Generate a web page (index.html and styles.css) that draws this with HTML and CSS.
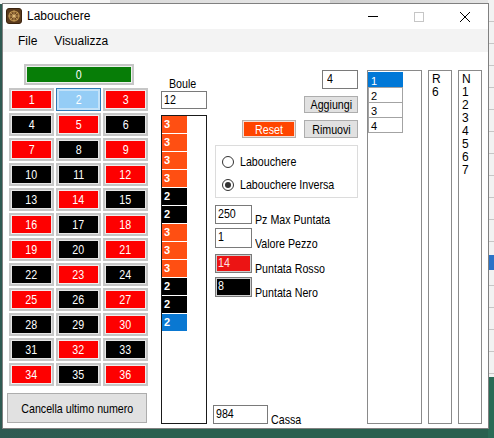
FILE: index.html
```html
<!DOCTYPE html>
<html lang="it">
<head>
<meta charset="utf-8">
<title>Labouchere</title>
<link rel="stylesheet" href="styles.css">
</head>
<body>
<div class="desktop">
  <div class="bg-top"></div>
  <div class="bg-right">
    <div class="bg-right-blue"></div>
    <div class="bg-right-teal"></div>
  </div>

  <div class="window">
    <div class="titlebar">
      <svg class="app-icon" viewBox="0 0 16 16" width="16" height="16">
        <rect x="0.5" y="0.5" width="15" height="15" rx="2.5" fill="#5a3a1c" stroke="#3a230f"/>
        <circle cx="8" cy="8" r="5.6" fill="#b08646"/>
        <circle cx="8" cy="8" r="4" fill="#6e4822"/>
        <path d="M8 2.4V13.6M2.4 8H13.6M4 4L12 12M12 4L4 12" stroke="#c9a060" stroke-width="0.8"/>
        <circle cx="8" cy="8" r="1.6" fill="#e0bb78"/>
      </svg>
      <span class="title">Labouchere</span>
      <div class="caption">
        <span class="cap-btn"><svg width="10" height="10" viewBox="0 0 10 10"><path d="M0 4.5H10" stroke="#000" stroke-width="1"/></svg></span>
        <span class="cap-btn"><svg width="10" height="10" viewBox="0 0 10 10"><rect x="0.5" y="0.5" width="9" height="9" fill="none" stroke="#c6c6c6" stroke-width="1"/></svg></span>
        <span class="cap-btn"><svg width="10" height="10" viewBox="0 0 10 10"><path d="M0 0L10 10M10 0L0 10" stroke="#000" stroke-width="1"/></svg></span>
      </div>
    </div>

    <div class="menubar">
      <span class="menu-item">File</span>
      <span class="menu-item">Visualizza</span>
    </div>

    <div class="client">
      <div class="col-roulette">
        <div class="zero"><span class="n">0</span></div>
        <div class="wheel-grid">
          <div class="cell red"><span class="n">1</span></div><div class="cell hot"><span class="n">2</span></div><div class="cell red"><span class="n">3</span></div>
          <div class="cell black"><span class="n">4</span></div><div class="cell red"><span class="n">5</span></div><div class="cell black"><span class="n">6</span></div>
          <div class="cell red"><span class="n">7</span></div><div class="cell black"><span class="n">8</span></div><div class="cell red"><span class="n">9</span></div>
          <div class="cell black"><span class="n">10</span></div><div class="cell black"><span class="n">11</span></div><div class="cell red"><span class="n">12</span></div>
          <div class="cell black"><span class="n">13</span></div><div class="cell red"><span class="n">14</span></div><div class="cell black"><span class="n">15</span></div>
          <div class="cell red"><span class="n">16</span></div><div class="cell black"><span class="n">17</span></div><div class="cell red"><span class="n">18</span></div>
          <div class="cell red"><span class="n">19</span></div><div class="cell black"><span class="n">20</span></div><div class="cell red"><span class="n">21</span></div>
          <div class="cell black"><span class="n">22</span></div><div class="cell red"><span class="n">23</span></div><div class="cell black"><span class="n">24</span></div>
          <div class="cell red"><span class="n">25</span></div><div class="cell black"><span class="n">26</span></div><div class="cell red"><span class="n">27</span></div>
          <div class="cell black"><span class="n">28</span></div><div class="cell black"><span class="n">29</span></div><div class="cell red"><span class="n">30</span></div>
          <div class="cell black"><span class="n">31</span></div><div class="cell red"><span class="n">32</span></div><div class="cell black"><span class="n">33</span></div>
          <div class="cell red"><span class="n">34</span></div><div class="cell black"><span class="n">35</span></div><div class="cell red"><span class="n">36</span></div>
        </div>
        <div class="btn cancel"><span class="n">Cancella ultimo numero</span></div>
      </div>

      <div class="col-boule">
        <div class="boule-label"><span class="n nl">Boule</span></div>
        <div class="tb boule-tb"><span class="n nl">12</span></div>
        <div class="boule-list">
          <div class="bi orange">3</div>
          <div class="bi orange">3</div>
          <div class="bi orange">3</div>
          <div class="bi orange">3</div>
          <div class="bi dark">2</div>
          <div class="bi dark">2</div>
          <div class="bi orange">3</div>
          <div class="bi orange">3</div>
          <div class="bi orange">3</div>
          <div class="bi dark">2</div>
          <div class="bi dark">2</div>
          <div class="bi sel">2</div>
        </div>
      </div>

      <div class="col-controls">
        <div class="tb tb-four"><span class="n nl">4</span></div>
        <div class="btn btn-small add"><span class="n">Aggiungi</span></div>
        <div class="btn-row">
          <div class="btn btn-small reset"><span class="n">Reset</span></div>
          <div class="btn btn-small"><span class="n">Rimuovi</span></div>
        </div>
        <div class="group">
          <div class="radio-row"><span class="radio"></span><span class="radio-text"><span class="n nl">Labouchere</span></span></div>
          <div class="radio-row"><span class="radio checked"></span><span class="radio-text"><span class="n nl">Labouchere Inversa</span></span></div>
        </div>
        <div class="field-row r-pz"><div class="tb tb-num"><span class="n nl">250</span></div><span class="field-label"><span class="n nl">Pz Max Puntata</span></span></div>
        <div class="field-row r-val"><div class="tb tb-num tall"><span class="n nl">1</span></div><span class="field-label"><span class="n nl">Valore Pezzo</span></span></div>
        <div class="field-row r-rosso"><div class="tb tb-num tb-red"><span class="n nl">14</span></div><span class="field-label"><span class="n nl">Puntata Rosso</span></span></div>
        <div class="field-row r-nero"><div class="tb tb-num tb-black tall"><span class="n nl">8</span></div><span class="field-label"><span class="n nl">Puntata Nero</span></span></div>
        <div class="field-row r-cassa"><div class="tb tb-cassa"><span class="n nl">984</span></div><span class="field-label"><span class="n nl">Cassa</span></span></div>
      </div>

      <div class="col-lists">
        <div class="list list-seq">
          <div class="li selected">1</div>
          <div class="li">2</div>
          <div class="li">3</div>
          <div class="li">4</div>
        </div>
        <div class="list list-text">R<br>6</div>
        <div class="list list-text">N<br>1<br>2<br>3<br>4<br>5<br>6<br>7</div>
      </div>
    </div>
  </div>
</div>
</body>
</html>
```
FILE: styles.css
```css
* { box-sizing: border-box; }
html, body { margin: 0; padding: 0; }
body {
  width: 494px;
  height: 438px;
  overflow: hidden;
  background: #29604f;
  font-family: "Liberation Sans", Arial, sans-serif;
}

.desktop {
  position: relative;
  width: 494px;
  height: 438px;
  overflow: hidden;
  background: linear-gradient(90deg, #2f5a52 0, #29604f 30%, #29604f 100%);
}

/* windows behind */
.bg-top {
  position: absolute;
  left: 0; top: 0;
  width: 494px; height: 4px;
  background: linear-gradient(90deg, #f4f4f4 0, #f4f4f4 110px, #d9d9d9 110px, #e9e9e9 330px, #cfcfcf 330px, #e6e6e6 494px);
}
.bg-right {
  position: absolute;
  left: 488px; top: 0;
  width: 6px; height: 438px;
  background: repeating-linear-gradient(180deg, #f2f2f2 0, #f2f2f2 21px, #c6c6c6 21px, #c6c6c6 22px);
}
.bg-right-blue {
  position: absolute;
  left: 0; top: 255px;
  width: 6px; height: 15px;
  background: #2b73c8;
}
.bg-right-teal {
  position: absolute;
  left: 0; top: 377px;
  width: 6px; height: 61px;
  background: #2a6b56;
}

/* window */
.window {
  position: absolute;
  left: 2px; top: 3px;
  width: 487px; height: 426px;
  border: 1px solid #808080;
  background: #fff;
  display: flex;
  flex-direction: column;
}

.titlebar {
  height: 25px;
  flex: none;
  display: flex;
  align-items: center;
  padding-left: 3px;
  background: #fff;
}
.app-icon { display: block; margin-top: -2px; }
.title {
  margin-left: 5px;
  margin-top: -1px;
  font-size: 12px;
  color: #000;
}
.caption {
  margin-left: auto;
  display: flex;
  height: 100%;
}
.cap-btn {
  width: 46px;
  display: flex;
  align-items: center;
  justify-content: center;
}
.cap-btn svg { display: block; }

.menubar {
  height: 23px;
  flex: none;
  display: flex;
  align-items: center;
  padding-left: 15px;
  background: #f3f3f3;
  font-size: 12px;
  color: #000;
}
.menu-item + .menu-item { margin-left: 17px; }

/* client area */
.client {
  flex: 1;
  display: flex;
  align-items: stretch;
  padding-bottom: 4px;
  font-family: "Liberation Sans", Arial, sans-serif;
  font-size: 13px;
  color: #000;
}

/* narrow text (Arial Narrow look) */
.n {
  display: inline-block;
  white-space: nowrap;
  transform: scaleX(0.82);
  transform-origin: center;
}
.n.nl { transform-origin: left center; }

/* roulette column */
.col-roulette {
  width: 141px;
  margin-left: 4px;
  padding-top: 12px;
  display: flex;
  flex-direction: column;
  align-items: flex-start;
}
.zero {
  width: 110px;
  height: 21px;
  margin-left: 17px;
  border: 2px solid #c6c6c6;
  box-shadow: inset 0 0 0 1px #eef2ee;
  background: #077d07;
  color: #fff;
  display: flex;
  align-items: center;
  justify-content: center;
}
.wheel-grid {
  margin-top: 3px;
  margin-left: 2px;
  display: grid;
  grid-template-columns: repeat(3, 45px);
  grid-auto-rows: 23px;
  gap: 2px;
}
.cell {
  border: 2px solid #c6c6c6;
  box-shadow: inset 0 0 0 1px #f3eded;
  color: #fff;
  display: flex;
  align-items: center;
  justify-content: center;
}
.cell.red { background: #fe0000; }
.cell.black { background: #000; box-shadow: inset 0 0 0 1px #e6e6e6; }
.cell.hot {
  background: #95cdf6;
  border: 1px solid #2f79b4;
  box-shadow: inset 0 0 0 2px #c4e2f8;
}

.btn {
  background: #e1e1e1;
  border: 1px solid #adadad;
  display: flex;
  align-items: center;
  justify-content: center;
  color: #000;
  white-space: nowrap;
}
.cancel {
  margin-top: 7px;
  width: 140px;
  height: 30px;
}

/* boule column */
.col-boule {
  width: 46px;
  margin-left: 13px;
  padding-top: 25px;
  display: flex;
  flex-direction: column;
}
.boule-label {
  line-height: 13px;
  padding-left: 8px;
  margin-bottom: 1px;
}
.tb {
  border: 1px solid #7a7a7a;
  background: #fff;
  padding-left: 2px;
  line-height: 15px;
  white-space: nowrap;
}
.boule-tb { height: 18px; }
.boule-list {
  flex: 1;
  margin-top: 6px;
  border: 1px solid #1a1a1a;
  background: #fff;
  display: flex;
  flex-direction: column;
}
.bi {
  width: 25px;
  height: 17px;
  margin-bottom: 1px;
  padding-left: 2px;
  line-height: 17px;
  font-size: 11px;
  font-weight: bold;
  color: #fff;
}
.bi.orange { background: #ff4f12; }
.bi.dark { background: #000; }
.bi.sel { background: #0a78d2; }

/* controls column */
.col-controls {
  width: 145px;
  margin-left: 6px;
  padding-top: 18px;
  display: flex;
  flex-direction: column;
}
.tb-four {
  width: 36px;
  height: 19px;
  align-self: flex-end;
  padding-left: 4px;
}
.btn-small {
  width: 54px;
}
.add {
  height: 17px;
  margin-top: 7px;
  align-self: flex-end;
}
.btn-row {
  margin-top: 7px;
  height: 18px;
  display: flex;
  justify-content: flex-end;
  gap: 8px;
}
.reset {
  background: #ff4500;
  color: #fff;
  border: 1px solid #b8b0ac;
  box-shadow: inset 0 0 0 1px #f6dfd6;
}
.group {
  margin-top: 7px;
  margin-left: 2px;
  width: 143px;
  height: 53px;
  border: 1px solid #dcdcdc;
  padding-top: 4px;
}
.radio-row {
  height: 23px;
  display: flex;
  align-items: center;
  padding-left: 6px;
}
.radio {
  width: 12px;
  height: 12px;
  flex: none;
  border: 1px solid #333;
  border-radius: 50%;
  background: #fff;
  display: flex;
  align-items: center;
  justify-content: center;
}
.radio.checked::after {
  content: "";
  width: 6px;
  height: 6px;
  border-radius: 50%;
  background: #333;
}
.radio-text { margin-left: 6px; white-space: nowrap; }

.field-row {
  display: flex;
  align-items: flex-end;
}
.field-label {
  margin-left: 3px;
  line-height: 13px;
  margin-bottom: -2px;
  white-space: nowrap;
}
.tb-num {
  width: 37px;
  height: 19px;
  margin-left: 2px;
  flex: none;
}
.tb-num.tall { height: 20px; }
.r-pz { margin-top: 7px; }
.r-val { margin-top: 4px; }
.r-rosso { margin-top: 6px; }
.r-nero { margin-top: 4px; }
.tb-red {
  background: #ec1414;
  color: #ffe2e2;
  box-shadow: inset 0 0 0 1px #cfcfcf;
}
.tb-black {
  background: #000;
  color: #fff;
  box-shadow: inset 0 0 0 1px #cfcfcf;
}
.r-cassa { margin-top: auto; }
.tb-cassa {
  width: 55px;
  height: 19px;
  flex: none;
}

/* lists column */
.col-lists {
  margin-left: 9px;
  padding-top: 18px;
  display: flex;
  gap: 6px;
}
.list {
  border: 1px solid #8a8a8a;
  background: #fff;
}
.list-seq {
  width: 55px;
  padding-top: 1px;
}
.li {
  width: 35px;
  height: 16px;
  margin-top: -1px;
  border: 1px solid #a3a3a3;
  padding: 1px 0 0 2px;
  line-height: 14px;
  font-size: 11px;
}
.li:first-child { margin-top: 0; }
.li.selected {
  background: #0078d7;
  border-color: #0078d7;
  color: #fff;
}
.list-text {
  width: 24px;
  padding: 2px 0 0 3px;
  font-size: 12px;
  line-height: 13px;
}
```
